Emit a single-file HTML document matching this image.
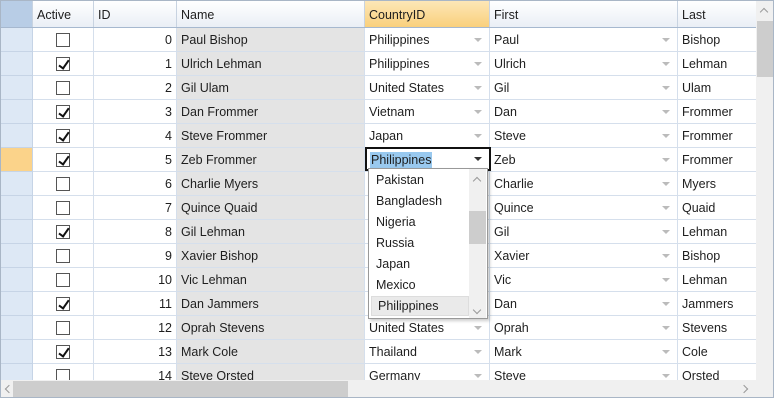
<!DOCTYPE html>
<html><head><style>
*{margin:0;padding:0;box-sizing:border-box}
body{width:775px;height:401px;overflow:hidden;background:#fff;font-family:"Segoe UI","Liberation Sans",sans-serif;font-size:12.5px;color:#1e1e1e;position:relative}
#wrap{position:absolute;left:0;top:0;width:774px;height:398px;border:1px solid #a9b6c6;overflow:hidden}
table{border-collapse:collapse;table-layout:fixed;position:absolute;left:-1px;top:-2px}
td,th{height:24px;border:1px solid #d5dfec;white-space:nowrap;overflow:hidden;padding:0 4px;font-weight:normal;text-align:left;position:relative}
th{height:28px;background:linear-gradient(#fff,#e9eef5);border-color:#c8d3e1;border-bottom-color:#a6b8cf;padding-top:2px}
th.rh0{background:#b8cde6}
th.cur{background:linear-gradient(#fde7b8,#f9cf7b)}
td.rh{background:#dde8f5;border-color:#c6d4e6}
td.rhc{background:#fbd38a}
td.nm{background:#e4e4e4}
td.id{text-align:right}
td.c{text-align:center}
.cb{display:inline-block;width:14px;height:14px;border:1px solid #555;vertical-align:middle;position:relative;background:#fff}
.cb.k::after{content:"";position:absolute;left:4px;top:0px;width:4px;height:9px;border:solid #111;border-width:0 2px 2px 0;transform:rotate(35deg)}
.ar::after{content:"";position:absolute;right:7px;top:10px;border:4px solid transparent;border-top:4px solid #bbb;border-bottom:0}
#vs{position:absolute;left:755px;top:0;width:18px;height:379px;background:#f0f0f0}
#hs{position:absolute;left:0;top:379px;width:755px;height:18px;background:#f0f0f0}
#corner{position:absolute;left:755px;top:379px;width:18px;height:18px;background:#f0f0f0}
#edit{position:absolute;left:364px;top:146px;width:126px;height:24px;border:2px solid #111;background:#fff}
#edit span{position:absolute;left:3px;top:3px;background:#99c9ef;line-height:16px;padding:0 1px}
#edit i{position:absolute;right:7px;top:8px;border:4px solid transparent;border-top:4px solid #333;border-bottom:0}
#pop{position:absolute;left:367px;top:167px;width:120px;height:151px;border:1px solid #999;background:#fff;box-shadow:2px 2px 3px rgba(0,0,0,.2)}
#pop div.it{position:absolute;left:1px;width:98px;height:21px;line-height:21px;padding-left:6px}
#pop .sel{background:#eaeaea;border:1px solid #ddd}
#psb{position:absolute;left:100px;top:0;width:17px;height:149px;background:#f0f0f0}
</style></head><body>
<div id="wrap">
<table>
<colgroup><col style="width:32px"><col style="width:61px"><col style="width:83px"><col style="width:188px"><col style="width:125px"><col style="width:188px"><col style="width:80px"></colgroup>
<tr><th class="rh0"></th><th>Active</th><th>ID</th><th>Name</th><th class="cur">CountryID</th><th>First</th><th>Last</th></tr>
<tr><td class="rh"></td><td class="c"><span class="cb"></span></td><td class="id">0</td><td class="nm">Paul Bishop</td><td class="ar">Philippines</td><td class="ar">Paul</td><td>Bishop</td></tr>
<tr><td class="rh"></td><td class="c"><span class="cb k"></span></td><td class="id">1</td><td class="nm">Ulrich Lehman</td><td class="ar">Philippines</td><td class="ar">Ulrich</td><td>Lehman</td></tr>
<tr><td class="rh"></td><td class="c"><span class="cb"></span></td><td class="id">2</td><td class="nm">Gil Ulam</td><td class="ar">United States</td><td class="ar">Gil</td><td>Ulam</td></tr>
<tr><td class="rh"></td><td class="c"><span class="cb k"></span></td><td class="id">3</td><td class="nm">Dan Frommer</td><td class="ar">Vietnam</td><td class="ar">Dan</td><td>Frommer</td></tr>
<tr><td class="rh"></td><td class="c"><span class="cb k"></span></td><td class="id">4</td><td class="nm">Steve Frommer</td><td class="ar">Japan</td><td class="ar">Steve</td><td>Frommer</td></tr>
<tr><td class="rh rhc"></td><td class="c"><span class="cb k"></span></td><td class="id">5</td><td class="nm">Zeb Frommer</td><td></td><td class="ar">Zeb</td><td>Frommer</td></tr>
<tr><td class="rh"></td><td class="c"><span class="cb"></span></td><td class="id">6</td><td class="nm">Charlie Myers</td><td></td><td class="ar">Charlie</td><td>Myers</td></tr>
<tr><td class="rh"></td><td class="c"><span class="cb"></span></td><td class="id">7</td><td class="nm">Quince Quaid</td><td></td><td class="ar">Quince</td><td>Quaid</td></tr>
<tr><td class="rh"></td><td class="c"><span class="cb k"></span></td><td class="id">8</td><td class="nm">Gil Lehman</td><td></td><td class="ar">Gil</td><td>Lehman</td></tr>
<tr><td class="rh"></td><td class="c"><span class="cb"></span></td><td class="id">9</td><td class="nm">Xavier Bishop</td><td></td><td class="ar">Xavier</td><td>Bishop</td></tr>
<tr><td class="rh"></td><td class="c"><span class="cb"></span></td><td class="id">10</td><td class="nm">Vic Lehman</td><td></td><td class="ar">Vic</td><td>Lehman</td></tr>
<tr><td class="rh"></td><td class="c"><span class="cb k"></span></td><td class="id">11</td><td class="nm">Dan Jammers</td><td></td><td class="ar">Dan</td><td>Jammers</td></tr>
<tr><td class="rh"></td><td class="c"><span class="cb"></span></td><td class="id">12</td><td class="nm">Oprah Stevens</td><td class="ar">United States</td><td class="ar">Oprah</td><td>Stevens</td></tr>
<tr><td class="rh"></td><td class="c"><span class="cb k"></span></td><td class="id">13</td><td class="nm">Mark Cole</td><td class="ar">Thailand</td><td class="ar">Mark</td><td>Cole</td></tr>
<tr><td class="rh"></td><td class="c"><span class="cb"></span></td><td class="id">14</td><td class="nm">Steve Orsted</td><td class="ar">Germany</td><td class="ar">Steve</td><td>Orsted</td></tr>
</table>
<div id="vs"><div style="position:absolute;left:5px;top:8px;width:6px;height:6px;border-left:1px solid #999;border-top:1px solid #999;transform:rotate(45deg)"></div><div style="position:absolute;left:1px;top:20px;width:16px;height:56px;background:#cdcdcd"></div></div>
<div id="hs"><div style="position:absolute;left:12px;top:1px;width:335px;height:16px;background:#cdcdcd"></div><div style="position:absolute;left:5px;top:6px;width:6px;height:6px;border-left:1px solid #999;border-bottom:1px solid #999;transform:rotate(45deg)"></div><div style="position:absolute;left:740px;top:6px;width:6px;height:6px;border-right:1px solid #999;border-top:1px solid #999;transform:rotate(45deg)"></div></div>
<div id="corner"></div>
<div id="edit"><span>Philippines</span><i></i></div>
<div id="pop">
<div class="it" style="top:1px">Pakistan</div>
<div class="it" style="top:22px">Bangladesh</div>
<div class="it" style="top:43px">Nigeria</div>
<div class="it" style="top:64px">Russia</div>
<div class="it" style="top:85px">Japan</div>
<div class="it" style="top:106px">Mexico</div>
<div class="it sel" style="top:127px;left:2px;height:20px;line-height:18px">Philippines</div>
<div id="psb"><div style="position:absolute;left:5px;top:9px;width:6px;height:6px;border-left:1px solid #999;border-top:1px solid #999;transform:rotate(45deg)"></div><div style="position:absolute;left:0;top:42px;width:17px;height:33px;background:#cdcdcd"></div><div style="position:absolute;left:5px;top:138px;width:6px;height:6px;border-right:1px solid #999;border-bottom:1px solid #999;transform:rotate(45deg)"></div></div>
</div>
</div>
</body></html>
